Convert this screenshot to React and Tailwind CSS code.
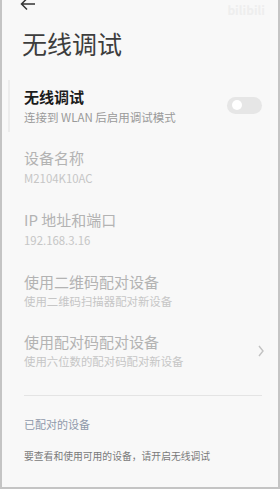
import React from "react";

const font = { fontFamily: '"Noto Sans CJK SC", "Noto Sans", sans-serif' };

const Item = ({ title, sub, mt, subMt = "mt-[5px]", chevron }) => (
  <div className={`flex items-center pr-[13px] ${mt}`}>
    <div className="flex-1">
      <div className="text-[15px] leading-[16px] text-[#b3b3b3]">{title}</div>
      <div className={`${subMt} text-[11.4px] leading-[12px] text-[#c6c6c6]`}>{sub}</div>
    </div>
    {chevron && (
      <svg width="8" height="12" viewBox="0 0 8 12">
        <polyline points="2,1 6,6 2,11" fill="none" stroke="#c2c2c2" strokeWidth="1.4" />
      </svg>
    )}
  </div>
);

export default function App() {
  return (
    <div
      style={font}
      className="relative h-[489px] w-[280px] overflow-hidden border-x-2 border-b-2 border-[#c4c4c4] bg-[#f8f8f8]"
    >
      {/* faint watermark */}
      <div className="absolute right-[13px] top-[3px] text-[12px] font-bold leading-[14px] text-[#eeeeee]">bilibili</div>

      <div className="h-[12px] pl-[18px]">
        <svg width="16" height="14" viewBox="0 0 16 14" className="-mt-[3px]">
          <path d="M15 7H2M7 1.5L1.5 7L7 12.5" fill="none" stroke="#333" strokeWidth="1.5" />
        </svg>
      </div>

      <div className="mt-[20px] pl-[20px] text-[25px] leading-[28px] text-[#3d3d3d]">无线调试</div>

      <div className="mt-[23px] ml-[6px] flex items-center border-l-2 border-[#ececec] py-[9px] pl-[14px] pr-[16px]">
        <div className="flex-1">
          <div className="text-[15px] font-bold leading-[16px] text-[#1c1c1c]">无线调试</div>
          <div className="mt-[6px] text-[11.5px] leading-[12px] text-[#9a9a9a]">连接到 WLAN 后启用调试模式</div>
        </div>
        <div className="mt-[-2px] flex h-[17px] w-[35px] items-center rounded-full bg-[#e6e6e6] pl-[5px]">
          <div className="h-[10px] w-[10px] rounded-full bg-white" />
        </div>
      </div>

      <div className="pl-[22px]">
        <Item mt="mt-[18px]" subMt="mt-[6px]" title="设备名称" sub="M2104K10AC" />
        <Item mt="mt-[28px]" subMt="mt-[6px]" title="IP 地址和端口" sub="192.168.3.16" />
        <Item mt="mt-[28px]" title="使用二维码配对设备" sub="使用二维码扫描器配对新设备" />
        <Item mt="mt-[27px]" title="使用配对码配对设备" sub="使用六位数的配对码配对新设备" chevron />

        <div className="mr-[16px] mt-[28px] h-px bg-[#e4e4e4]" />

        <div className="mt-[22px] text-[11px] leading-[12px] text-[#8f98aa]">已配对的设备</div>
        <div className="mt-[20px] text-[9.8px] leading-[12px] text-[#7a7a7a]">要查看和使用可用的设备，请开启无线调试</div>
      </div>
    </div>
  );
}
